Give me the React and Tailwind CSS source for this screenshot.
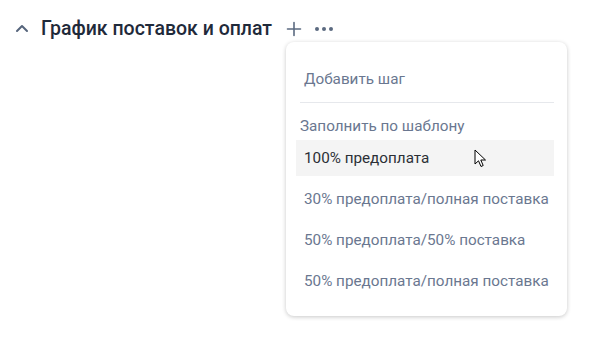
import React from "react";

function Cursor() {
  return (
    <svg width="14" height="20" viewBox="0 0 14 20" className="absolute left-[474px] top-[149px]">
      <path d="M1 1 L1 15 L4.5 11.8 L7 17.5 L9.2 16.5 L6.8 11 L11.5 11 Z" fill="#fff" stroke="#000" strokeWidth="1" strokeLinejoin="miter" />
    </svg>
  );
}

export default function App() {
  const items = [
    "30% предоплата/полная поставка",
    "50% предоплата/50% поставка",
    "50% предоплата/полная поставка",
  ];
  return (
    <div className="relative w-[595px] h-[341px] bg-white" style={{ fontFamily: "Roboto, 'Noto Sans', sans-serif" }}>
      <div className="flex items-center h-[58px] pl-[15px] pb-[0px]">
        <svg width="14" height="10" viewBox="0 0 14 10" className="mt-[-2px]">
          <path d="M2 8 L7 3 L12 8" fill="none" stroke="#56657c" strokeWidth="2" strokeLinecap="round" strokeLinejoin="round" />
        </svg>
        <div className="ml-[12px] text-[19.5px] font-medium text-[#1f2a3a] leading-[24px]">График поставок и оплат</div>
        <svg width="16" height="16" viewBox="0 0 16 16" className="ml-[14px]">
          <path d="M8 1.5 V14.5 M1.5 8 H14.5" stroke="#5b6a80" strokeWidth="1.6" strokeLinecap="round" />
        </svg>
        <svg width="20" height="6" viewBox="0 0 20 6" className="ml-[12px]">
          <circle cx="3" cy="3" r="2" fill="#5b6a80" />
          <circle cx="10" cy="3" r="2" fill="#5b6a80" />
          <circle cx="17" cy="3" r="2" fill="#5b6a80" />
        </svg>
      </div>
      <div className="absolute left-[286px] top-[42px] w-[281px] h-[274px] bg-white rounded-[8px] shadow-[0_1px_4px_rgba(0,0,0,0.22)] pl-[10px] pr-[13px] pt-[18px] text-[15.25px]">
        <div className="h-[38px] flex items-center pl-[8px] text-[#6a7790]">Добавить шаг</div>
        <div className="mt-[4px] ml-[4px] h-px bg-[#e6e8ec]" />
        <div className="h-[37px] pt-[13px] pl-[4px] leading-[20px] text-[#6a7790]">Заполнить по шаблону</div>
        <div className="flex flex-col gap-[5px]">
          <div className="h-[36px] flex items-center pl-[8px] bg-[#f4f4f4] text-[#2b2f36]">100% предоплата</div>
          {items.map((t, i) => (
            <div key={i} className="h-[36px] flex items-center pl-[8px] text-[#6a7790]">{t}</div>
          ))}
        </div>
      </div>
      <Cursor />
    </div>
  );
}
